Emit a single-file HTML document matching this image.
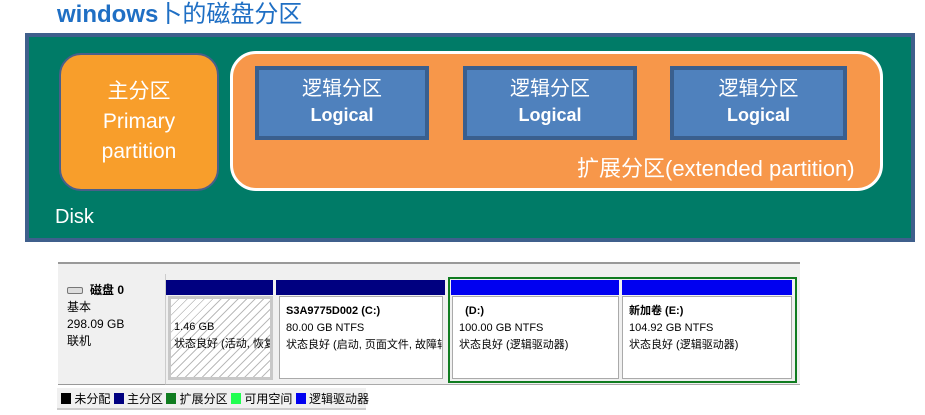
<!DOCTYPE html>
<html><head><meta charset="utf-8"><style>
*{margin:0;padding:0;box-sizing:border-box}
body{width:925px;height:415px;background:#fff;position:relative;overflow:hidden;font-family:"Liberation Sans","Noto Sans CJK SC",sans-serif}
.a{position:absolute}
.title{left:57px;top:-6px;font-size:24px;font-weight:bold;color:#1f6fc4;letter-spacing:0}
.title span{font-weight:normal}
.disk{left:25px;top:33px;width:890px;height:209px;background:#007b67;border:4px solid #3f5f8c}
.prim{left:59px;top:53px;width:160px;height:138px;background:#f89e2b;border:2px solid #4a5f8a;border-radius:22px;color:#fff;text-align:center;font-size:21px;line-height:30px;padding-top:22px}
.ext{left:230px;top:51px;width:653px;height:140px;background:#f7974a;border:3px solid #fff;border-radius:26px}
.log{top:66px;height:74px;background:#4f81bd;border:4px solid #3a5f8e;color:#fff;text-align:center;font-size:20px;line-height:26px;padding-top:6px}
.log b{font-size:18px;font-weight:bold}
.sm{font-size:11px;color:#000;line-height:17px}
.bar{top:280px;height:15px;background:#000080}
.cell{top:296px;height:83px;background:#fff;border:1px solid #aaa;padding:6px 0 0 6px}
</style></head><body>
<div class="a title">windows<span>卜的磁盘分区</span></div>
<div class="a disk"></div>
<div class="a prim">主分区<br>Primary<br>partition</div>
<div class="a ext"></div>
<div class="a log" style="left:255px;width:174px">逻辑分区<br><b>Logical</b></div>
<div class="a log" style="left:463px;width:174px">逻辑分区<br><b>Logical</b></div>
<div class="a log" style="left:670px;width:177px">逻辑分区<br><b>Logical</b></div>
<div class="a" style="left:577px;top:151px;color:#fff;font-size:22px;white-space:nowrap">扩展分区(extended partition)</div>
<div class="a" style="left:55px;top:206px;color:#fff;font-size:20px">Disk</div>

<div class="a" style="left:58px;top:262px;width:742px;height:2px;background:#999"></div>
<div class="a" style="left:58px;top:264px;width:742px;height:10px;background:#f0f0f0"></div>
<div class="a sm" style="left:58px;top:274px;width:108px;height:111px;background:#f0f0f0;border-right:1px solid #ccc;border-bottom:1px solid #999;padding:8px 0 0 9px;font-size:12px">
<div><span style="display:inline-block;width:16px;height:7px;border:1px solid #777;border-radius:2px;background:#ddd;margin-right:7px"></span><b>磁盘 0</b></div>
<div>基本</div><div>298.09 GB</div><div>联机</div></div>
<div class="a" style="left:166px;top:274px;width:634px;height:111px;background:#f0f0f0;border-bottom:1px solid #aaa"></div>
<div class="a bar" style="left:166px;width:107px"></div>
<div class="a bar" style="left:276px;width:169px"></div>
<div class="a" style="left:448px;top:277px;width:349px;height:106px;border:2px solid #107c20"></div>
<div class="a bar" style="left:451px;width:168px;background:#0000f0"></div>
<div class="a bar" style="left:622px;width:170px;background:#0000f0"></div>
<div class="a cell sm" style="left:168px;width:105px;background:repeating-linear-gradient(135deg,#fff 0 5px,#bbb 5px 6px);border:3px solid #c8c8c8;padding-top:20px;padding-left:3px;height:84px;white-space:nowrap;overflow:hidden">1.46 GB<br>状态良好 (活动, 恢复</div>
<div class="a cell sm" style="left:279px;width:164px;white-space:nowrap;overflow:hidden"><b>S3A9775D002 (C:)</b><br>80.00 GB NTFS<br>状态良好 (启动, 页面文件, 故障转</div>
<div class="a cell sm" style="left:452px;width:167px"><b>&nbsp;&nbsp;(D:)</b><br>100.00 GB NTFS<br>状态良好 (逻辑驱动器)</div>
<div class="a cell sm" style="left:622px;width:170px"><b>新加卷 (E:)</b><br>104.92 GB NTFS<br>状态良好 (逻辑驱动器)</div>

<div class="a sm" style="left:57px;top:388px;width:309px;height:22px;background:#f0f0f0;border-bottom:2px solid #ccc;padding:3px 0 0 4px;white-space:nowrap;font-size:12px">
<span style="display:inline-block;width:10px;height:11px;background:#000;vertical-align:-1px"></span> 未分配
<span style="display:inline-block;width:10px;height:11px;background:#000080;vertical-align:-1px"></span> 主分区
<span style="display:inline-block;width:10px;height:11px;background:#107c20;vertical-align:-1px"></span> 扩展分区
<span style="display:inline-block;width:10px;height:11px;background:#20ff50;vertical-align:-1px"></span> 可用空间
<span style="display:inline-block;width:10px;height:11px;background:#0000f0;vertical-align:-1px"></span> 逻辑驱动器</div>
</body></html>
